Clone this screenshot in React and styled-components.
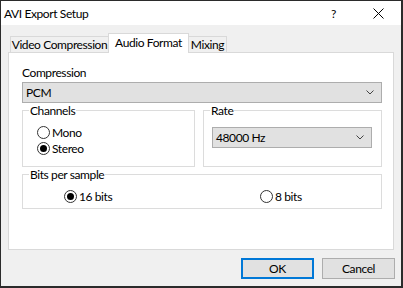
import React from 'react'
import styled, { createGlobalStyle } from 'styled-components'

const GlobalStyle = createGlobalStyle`
  html, body {
    margin:0;
    padding:0;
    background:#f0f0f0;
  }
  body {
    font-family:"Segoe UI", Lato, sans-serif;
    font-size:12px;
    letter-spacing:-0.4px;
    color:#000;
  }
  *{
    box-sizing:border-box;
  }
`;

const Window = styled.div`
width:403px;
height:288px;
display:flex;
flex-direction:column;
border:1px solid #2b2b2b;
border-right-width:2px;
border-bottom-width:2px;
background:#f0f0f0;
`;

const TitleBar = styled.div`
height:24px;
flex:none;
display:flex;
align-items:center;
background:#fff;
padding-left:3px;
`;

const Title = styled.div`
flex:1;
line-height:15px;
`;

const CaptionButton = styled.div`
width:45px;
height:24px;
display:flex;
align-items:center;
justify-content:center;
`;

const Body = styled.div`
flex:1;
display:flex;
flex-direction:column;
padding:8px 7px 0 7px;
`;

const TabRow = styled.div`
display:flex;
align-items:flex-end;
height:19px;
padding-left:2px;
`;

const Tab = styled.div`
width:${p => p.$w}px;
height:${p => p.$active ? 20 : 16}px;
margin-bottom:${p => p.$active ? -1 : 0}px;
margin-left:${p => p.$first ? 0 : -1}px;
position:relative;
z-index:${p => p.$active ? 1 : 0};
background:${p => p.$active ? '#fff' : '#f0f0f0'};
border:1px solid #d9d9d9;
border-bottom:none;
display:flex;
align-items:center;
justify-content:center;
white-space:nowrap;
line-height:15px;
padding-bottom:${p => p.$active ? 3 : 0}px;
`;

const Panel = styled.div`
height:198px;
display:flex;
flex-direction:column;
background:#fff;
border:1px solid #d9d9d9;
padding:12px 11px 0 13px;
`;

const Label = styled.div`
line-height:15px;
`;

const Combo = styled.div`
height:21px;
width:${p => p.$w ? p.$w + 'px' : 'auto'};
margin-top:${p => p.$mt || 0}px;
display:flex;
align-items:center;
justify-content:space-between;
background:#e1e1e1;
border:1px solid #adadad;
padding:0 7px 0 3px;
line-height:15px;
`;

const Columns = styled.div`
display:grid;
grid-template-columns:173px 1fr;
column-gap:8px;
`;

const Group = styled.fieldset`
margin:0;
padding:0;
min-width:0;
border:1px solid #dcdcdc;
height:${p => p.$h}px;
legend{
  padding:0 1px;
  margin-left:6px;
  line-height:15px;
}
`;

const GroupBody = styled.div`
display:flex;
flex-direction:${p => p.$row ? 'row' : 'column'};
padding:${p => p.$pad};
`;

const RadioRow = styled.div`
display:flex;
align-items:center;
height:16px;
width:${p => p.$w ? p.$w + 'px' : 'auto'};
gap:2px;
line-height:15px;
`;

const RadioDot = styled.span`
width:13px;
height:13px;
flex:none;
border-radius:50%;
border:1px solid #333;
background:#fff;
display:flex;
align-items:center;
justify-content:center;
&::after{
  content:'';
  width:7px;
  height:7px;
  border-radius:50%;
  background:${p => p.$on ? '#000' : 'transparent'};
}
`;

const Buttons = styled.div`
display:flex;
justify-content:flex-end;
gap:8px;
margin-top:8px;
margin-right:-1px;
`;

const Button = styled.div`
width:73px;
height:21px;
display:flex;
align-items:center;
justify-content:center;
background:#e1e1e1;
border:${p => p.$default ? '2px solid #0078d7' : '1px solid #adadad'};
line-height:15px;
`;

function Chevron() {
    return (
        <svg width="8" height="5" viewBox="0 0 8 5">
            <polyline points="0.5,0.5 4,4 7.5,0.5" fill="none" stroke="#444" strokeWidth="1" />
        </svg>
    )
}

function Radio({ on, children, w }) {
    return (
        <RadioRow $w={w}>
            <RadioDot $on={on} />
            <span>{children}</span>
        </RadioRow>
    )
}

function App() {
    return (
        <>
            <GlobalStyle />
            <Window>
                <TitleBar>
                    <Title>AVI Export Setup</Title>
                    <CaptionButton>?</CaptionButton>
                    <CaptionButton>
                        <svg width="11" height="11" viewBox="0 0 11 11">
                            <path d="M0.5 0.5 L10.5 10.5 M10.5 0.5 L0.5 10.5" stroke="#000" strokeWidth="1" />
                        </svg>
                    </CaptionButton>
                </TitleBar>
                <Body>
                    <TabRow>
                        <Tab $w={99} $first>Video Compression</Tab>
                        <Tab $w={81} $active>Audio Format</Tab>
                        <Tab $w={39}>Mixing</Tab>
                    </TabRow>
                    <Panel>
                        <Label>Compression</Label>
                        <Combo $mt={2}>
                            <span>PCM</span>
                            <Chevron />
                        </Combo>
                        <Columns>
                            <Group $h={64}>
                                <legend>Channels</legend>
                                <GroupBody $pad="6px 0 0 14px">
                                    <Radio>Mono</Radio>
                                    <Radio on>Stereo</Radio>
                                </GroupBody>
                            </Group>
                            <Group $h={64}>
                                <legend>Rate</legend>
                                <GroupBody $pad="9px 0 0 8px">
                                    <Combo $w={160}>
                                        <span>48000 Hz</span>
                                        <Chevron />
                                    </Combo>
                                </GroupBody>
                            </Group>
                        </Columns>
                        <Group $h={42}>
                            <legend>Bits per sample</legend>
                            <GroupBody $pad="6px 0 0 41px" $row>
                                <Radio on w={196}>16 bits</Radio>
                                <Radio>8 bits</Radio>
                            </GroupBody>
                        </Group>
                    </Panel>
                    <Buttons>
                        <Button $default>OK</Button>
                        <Button>Cancel</Button>
                    </Buttons>
                </Body>
            </Window>
        </>
    )
}

export default App
